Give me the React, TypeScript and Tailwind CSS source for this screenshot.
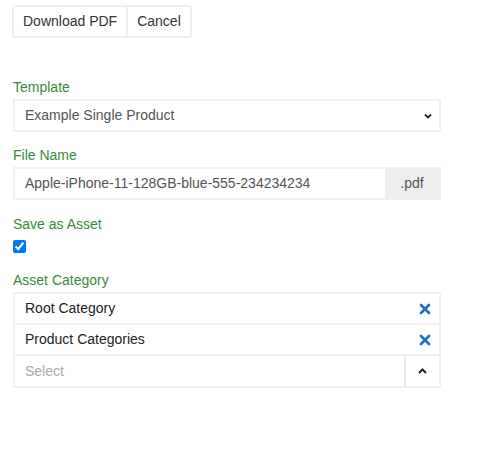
import React from "react";

const Label = ({ children }: { children: React.ReactNode }) => (
  <div className="text-[14px] leading-[20px] text-[#3c8a3c] mb-[2px]">{children}</div>
);

const XIcon = () => (
  <svg width="12" height="12" viewBox="0 0 12 12">
    <path d="M2 2 L10 10 M10 2 L2 10" stroke="#1a6fc9" strokeWidth="2.6" strokeLinecap="round" />
  </svg>
);

export default function App() {
  return (
    <div className="w-[489px] h-[465px] bg-white font-['Liberation_Sans',Arial,sans-serif] text-[14px] text-[#333]">
      <div className="pt-[5px] pl-[12px]">
        <div className="inline-flex border-2 border-[#eeeeee] rounded-[3px] h-[33px]">
          <button className="px-[9px] h-full text-[14px] text-[#333] bg-white border-r-2 border-[#eeeeee]">
            Download PDF
          </button>
          <button className="px-[9px] h-full text-[14px] text-[#333] bg-white">Cancel</button>
        </div>
      </div>

      <div className="pl-[13px] w-[441px] mt-[39px]">
        <Label>Template</Label>
        <div className="flex items-center justify-between h-[33px] border-2 border-[#f0f0f0] pl-[10px] pr-[7px] text-[#555]">
          <span>Example Single Product</span>
          <svg width="8" height="6" viewBox="0 0 8 6">
            <path d="M1 1.5 L4 4.5 L7 1.5" fill="none" stroke="#222" strokeWidth="1.8" />
          </svg>
        </div>

        <div className="mt-[13px]">
          <Label>File Name</Label>
          <div className="flex h-[33px] border-2 border-[#f0f0f0]">
            <div className="flex-1 flex items-center pl-[10px] text-[#555]">
              Apple-iPhone-11-128GB-blue-555-234234234
            </div>
            <div className="w-[54px] flex items-center justify-center bg-[#eeeeee] text-[#555]">.pdf</div>
          </div>
        </div>

        <div className="mt-[14px]">
          <Label>Save as Asset</Label>
          <input
            type="checkbox"
            defaultChecked
            className="block w-[13px] h-[13px] m-0 mt-[6px] accent-[#0075ff]"
          />
        </div>

        <div className="mt-[17px]">
          <Label>Asset Category</Label>
          <div className="border-2 border-[#f0f0f0]">
            <div className="flex items-center justify-between h-[31px] pl-[10px] pr-[8px] border-b-2 border-[#f0f0f0] text-[#222]">
              <span>Root Category</span>
              <XIcon />
            </div>
            <div className="flex items-center justify-between h-[31px] pl-[10px] pr-[8px] border-b-2 border-[#f0f0f0] text-[#222]">
              <span>Product Categories</span>
              <XIcon />
            </div>
            <div className="flex items-center h-[30px] text-[#aaa]">
              <span className="flex-1 pl-[10px]">Select</span>
              <div className="w-[35px] h-full flex items-center justify-center border-l-2 border-[#eaeaea]">
                <svg width="9" height="6" viewBox="0 0 9 6">
                  <path d="M1 5 L4.5 1.5 L8 5" fill="none" stroke="#222" strokeWidth="2" />
                </svg>
              </div>
            </div>
          </div>
        </div>
      </div>
    </div>
  );
}
